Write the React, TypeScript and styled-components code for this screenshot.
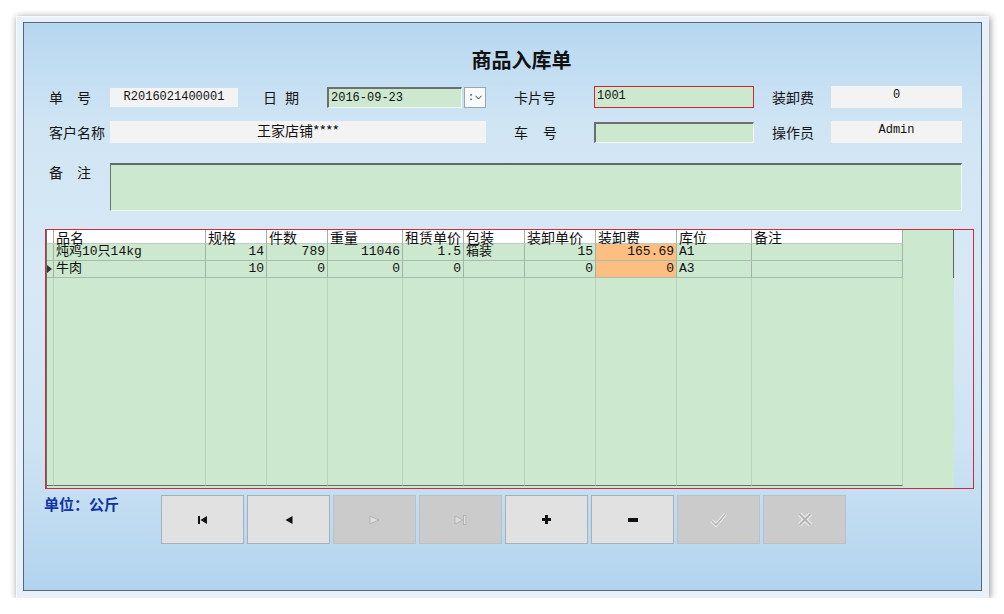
import React from "react";
import styled, { createGlobalStyle } from "styled-components";

const GlobalStyle = createGlobalStyle`
  body {
    margin: 0;
    background: #ffffff;
    font-family: "Noto Sans CJK SC", sans-serif;
  }
`;

const Frame = styled.div`
  margin: 16px 0 0 16px;
  width: 973px;
  height: 582px;
  box-sizing: border-box;
  padding: 6px 7px 7px 7px;
  background: #e8f0f9;
  box-shadow: 1px 1px 7px rgba(0, 0, 0, 0.45), inset 1px 1px 0 #f7fafd;
`;

const Panel = styled.div`
  height: 100%;
  box-sizing: border-box;
  border: 1px solid #56687a;
  background: linear-gradient(180deg, #b6d7f0 0%, #d0e5f4 18%, #d8e9f5 45%, #cde3f3 75%, #b2d4ef 100%);
  display: flex;
  flex-direction: column;
  padding-top: 26px;
`;

const Title = styled.h1`
  margin: 0;
  padding-left: 38px;
  text-align: center;
  font-size: 20px;
  line-height: 22px;
  font-weight: bold;
  color: #111;
`;

const FormRow = styled.div<{ $top: number; $height: number }>`
  display: grid;
  grid-template-columns: 61px 128px 25px 64px 159px 28px 80px 160px 18px 59px 131px;
  grid-template-rows: ${({ $height }) => $height}px;
  align-items: center;
  margin: ${({ $top }) => $top}px 0 0 25px;
`;

const Label = styled.span<{ $col: number; $spacing?: number; $start?: boolean }>`
  grid-column: ${({ $col }) => $col};
  align-self: ${({ $start }) => ($start ? "start" : "center")};
  padding-top: ${({ $start }) => ($start ? 1 : 0)}px;
  font-size: 14px;
  line-height: 16px;
  color: #141414;
  white-space: nowrap;
  letter-spacing: ${({ $spacing }) => $spacing ?? 0}px;
`;

const ReadBox = styled.div<{ $col: string; $mono?: boolean; $h: number }>`
  grid-column: ${({ $col }) => $col};
  height: ${({ $h }) => $h}px;
  box-sizing: border-box;
  padding-top: 2px;
  background: #f3f3f3;
  text-align: center;
  color: #111;
  font-family: ${({ $mono }) => ($mono ? '"Liberation Mono", monospace' : '"Noto Sans CJK SC", sans-serif')};
  font-size: ${({ $mono }) => ($mono ? 12 : 14)}px;
  line-height: 15px;
  white-space: nowrap;
`;

const InputBox = styled.div<{ $alert?: boolean; $col?: number }>`
  ${({ $col }) => ($col ? `grid-column: ${$col};` : "flex: 1;")}
  height: ${({ $alert }) => ($alert ? 22 : 21)}px;
  box-sizing: border-box;
  background: #cce8cf;
  padding: 3px 0 0 2px;
  font-family: "Liberation Mono", monospace;
  font-size: 12px;
  line-height: 13px;
  color: #111;
  border: ${({ $alert }) => ($alert ? "1px solid #cc2636" : "none")};
  ${({ $alert }) =>
    $alert
      ? ""
      : `border-top: 2px solid #6b6f70;
  border-left: 2px solid #6b6f70;
  border-right: 1px solid #f4f6f4;
  border-bottom: 1px solid #f4f6f4;`}
`;

const DateField = styled.div`
  grid-column: 5;
  display: flex;
  gap: 2px;
  height: 21px;
`;

const DropButton = styled.div`
  width: 22px;
  box-sizing: border-box;
  border: 1px solid #9ba5ad;
  background: #f8f9fa;
  display: flex;
  align-items: center;
  justify-content: center;
  gap: 1px;
  font-family: "Liberation Mono", monospace;
  font-size: 10px;
  color: #333;
`;

const NoteArea = styled.div`
  grid-column: 2 / 12;
  height: 48px;
  box-sizing: border-box;
  background: #cce8cf;
  border-top: 2px solid #5f6a6a;
  border-left: 1px solid #6b7272;
  border-right: 1px solid #f4f6f4;
  border-bottom: 1px solid #f4f6f4;
`;

const GridFrame = styled.div`
  margin: 18px 0 0 21px;
  width: 929px;
  height: 260px;
  box-sizing: border-box;
  border: 1px solid #d22a3b;
  display: flex;
`;

const GridArea = styled.div`
  width: 908px;
  box-sizing: border-box;
  background: #cce8cf;
  border-left: 1px solid #6c6c6c;
  padding-bottom: 2px;
  display: flex;
  flex-direction: column;
`;

const GridRow = styled.div<{ $h?: number; $fill?: boolean }>`
  display: flex;
  ${({ $fill, $h }) => ($fill ? "flex: 1;" : `height: ${$h}px;`)}
`;

const Cell = styled.div<{
  $w: number;
  $align?: string;
  $kind: "head" | "data" | "fill";
  $hl?: boolean;
}>`
  width: ${({ $w }) => $w}px;
  flex: none;
  box-sizing: border-box;
  overflow: ${({ $kind }) => ($kind === "head" ? "visible" : "hidden")};
  white-space: nowrap;
  text-align: ${({ $align }) => $align ?? "left"};
  padding: 0 2px 0 2px;
  color: #111;
  background: ${({ $kind, $hl }) => ($kind === "head" ? "#ffffff" : $hl ? "#fdbe82" : "transparent")};
  border-right: 1px solid ${({ $kind }) => ($kind === "fill" ? "#b9d0ba" : "#a2b5a4")};
  border-bottom: 1px solid ${({ $kind }) => ($kind === "fill" ? "#6c6c6c" : $kind === "head" ? "#c4c8c4" : "#a9bcab")};
  font-family: ${({ $kind }) => ($kind === "head" ? '"Noto Sans CJK SC", sans-serif' : '"Liberation Mono", "Noto Sans CJK SC", monospace')};
  font-size: ${({ $kind }) => ($kind === "head" ? 14 : 13)}px;
  line-height: ${({ $kind }) => ($kind === "head" ? 14 : 16)}px;
  position: relative;
`;

const RowTail = styled.div<{ $edge: boolean }>`
  flex: 1;
  border-right: ${({ $edge }) => ($edge ? "1px solid #5e6466" : "none")};
`;

const Pointer = styled.span`
  position: absolute;
  left: 0;
  top: 4px;
  width: 0;
  height: 0;
  border-top: 4px solid transparent;
  border-bottom: 4px solid transparent;
  border-left: 5px solid #333;
`;

const BottomBar = styled.div`
  display: flex;
  align-items: flex-start;
  margin: 6px 0 0 20px;
`;

const Unit = styled.div`
  width: 117px;
  padding-top: 1px;
  font-size: 15px;
  line-height: 16px;
  font-weight: bold;
  color: #1232a6;
`;

const ButtonRow = styled.div`
  display: flex;
  gap: 3px;
`;

const NavButton = styled.div<{ $disabled?: boolean }>`
  width: 83px;
  height: 49px;
  box-sizing: border-box;
  border: 1px solid ${({ $disabled }) => ($disabled ? "#b9c1c8" : "#a6b0ba")};
  background: ${({ $disabled }) => ($disabled ? "#cbcbcb" : "#e1e1e1")};
  display: flex;
  align-items: center;
  justify-content: center;
`;

type Col = { title: string; width: number; align: "left" | "right"; hl?: boolean };

const columns: Col[] = [
  { title: "品名", width: 152, align: "left" },
  { title: "规格", width: 61, align: "right" },
  { title: "件数", width: 61, align: "right" },
  { title: "重量", width: 75, align: "right" },
  { title: "租赁单价", width: 61, align: "right" },
  { title: "包装", width: 61, align: "left" },
  { title: "装卸单价", width: 71, align: "right" },
  { title: "装卸费", width: 81, align: "right", hl: true },
  { title: "库位", width: 75, align: "left" },
  { title: "备注", width: 151, align: "left" },
];

const rows: string[][] = [
  ["炖鸡10只14kg", "14", "789", "11046", "1.5", "箱装", "15", "165.69", "A1", ""],
  ["牛肉", "10", "0", "0", "0", "", "0", "0", "A3", ""],
];

const icons: Record<string, React.ReactNode> = {
  first: (
    <svg width="10" height="8" viewBox="0 0 10 8">
      <rect x="0" y="0" width="2" height="8" fill="#111" />
      <path d="M2.5 4 L9 0 L9 8 Z" fill="#111" />
    </svg>
  ),
  prev: (
    <svg width="8" height="8" viewBox="0 0 8 8">
      <path d="M0.5 4 L7.5 0 L7.5 8 Z" fill="#111" />
    </svg>
  ),
  next: (
    <svg width="11" height="10" viewBox="0 0 11 10">
      <path d="M1 1 L10 5 L1 9 Z" fill="#dedede" stroke="#b3b3b3" strokeWidth="1" />
    </svg>
  ),
  last: (
    <svg width="13" height="10" viewBox="0 0 13 10">
      <path d="M1 1 L9 5 L1 9 Z" fill="#dedede" stroke="#b3b3b3" strokeWidth="1" />
      <rect x="9.5" y="0.5" width="2.5" height="9" fill="#dedede" stroke="#b3b3b3" strokeWidth="1" />
    </svg>
  ),
  add: (
    <svg width="9" height="9" viewBox="0 0 9 9">
      <rect x="3" y="0" width="3" height="9" fill="#111" />
      <rect x="0" y="3" width="9" height="3" fill="#111" />
    </svg>
  ),
  remove: (
    <svg width="10" height="4" viewBox="0 0 10 4">
      <rect x="0" y="0" width="10" height="4" fill="#111" />
    </svg>
  ),
  save: (
    <svg width="17" height="15" viewBox="0 0 17 15">
      <path d="M1.5 8.5 L6 13 L15.5 2" fill="none" stroke="#f2f2f2" strokeWidth="3.4" />
      <path d="M1.5 8.5 L6 13 L15.5 2" fill="none" stroke="#b5b5b5" strokeWidth="1.6" />
    </svg>
  ),
  cancel: (
    <svg width="16" height="15" viewBox="0 0 16 15">
      <path d="M2.5 2 L13.5 13 M13.5 2 L2.5 13" fill="none" stroke="#f0f0f0" strokeWidth="4" />
      <path d="M2.5 2 L13.5 13 M13.5 2 L2.5 13" fill="none" stroke="#b2b2b2" strokeWidth="2" />
    </svg>
  ),
};

const buttons: { key: string; disabled?: boolean }[] = [
  { key: "first" },
  { key: "prev" },
  { key: "next", disabled: true },
  { key: "last", disabled: true },
  { key: "add" },
  { key: "remove" },
  { key: "save", disabled: true },
  { key: "cancel", disabled: true },
];

const App: React.FC = () => {
  return (
    <>
      <GlobalStyle />
      <Frame>
        <Panel>
          <Title>商品入库单</Title>

          <FormRow $top={15} $height={22}>
            <Label $col={1} $spacing={14}>单号</Label>
            <ReadBox $col="2" $mono $h={19}>R2016021400001</ReadBox>
            <Label $col={4} $spacing={8}>日期</Label>
            <DateField>
              <InputBox>2016-09-23</InputBox>
              <DropButton>
                <span>:</span>
                <svg width="7" height="5" viewBox="0 0 7 5">
                  <path d="M0.5 0.8 L3.5 4 L6.5 0.8" fill="none" stroke="#444" strokeWidth="1" />
                </svg>
              </DropButton>
            </DateField>
            <Label $col={7}>卡片号</Label>
            <InputBox $col={8} $alert>1001</InputBox>
            <Label $col={10}>装卸费</Label>
            <ReadBox $col="11" $mono $h={22}>0</ReadBox>
          </FormRow>

          <FormRow $top={13} $height={22}>
            <Label $col={1}>客户名称</Label>
            <ReadBox $col="2 / 6" $h={22}>王家店铺****</ReadBox>
            <Label $col={7} $spacing={15}>车号</Label>
            <InputBox $col={8} />
            <Label $col={10}>操作员</Label>
            <ReadBox $col="11" $mono $h={22}>Admin</ReadBox>
          </FormRow>

          <FormRow $top={20} $height={48}>
            <Label $col={1} $spacing={14} $start>备注</Label>
            <NoteArea />
          </FormRow>

          <GridFrame>
            <GridArea>
              <GridRow $h={14}>
                <Cell $w={7} $kind="head" />
                {columns.map((c) => (
                  <Cell key={c.title} $w={c.width} $kind="head">
                    {c.title}
                  </Cell>
                ))}
                <RowTail $edge />
              </GridRow>
              {rows.map((r, ri) => (
                <GridRow key={ri} $h={17}>
                  <Cell $w={7} $kind="data">{ri === rows.length - 1 && <Pointer />}</Cell>
                  {columns.map((c, ci) => (
                    <Cell key={c.title} $w={c.width} $kind="data" $align={c.align} $hl={c.hl}>
                      {r[ci]}
                    </Cell>
                  ))}
                  <RowTail $edge />
                </GridRow>
              ))}
              <GridRow $fill>
                <Cell $w={7} $kind="fill" />
                {columns.map((c) => (
                  <Cell key={c.title} $w={c.width} $kind="fill" />
                ))}
                <RowTail $edge={false} />
              </GridRow>
            </GridArea>
          </GridFrame>

          <BottomBar>
            <Unit>单位：公斤</Unit>
            <ButtonRow>
              {buttons.map((b) => (
                <NavButton key={b.key} $disabled={b.disabled}>
                  {icons[b.key]}
                </NavButton>
              ))}
            </ButtonRow>
          </BottomBar>
        </Panel>
      </Frame>
    </>
  );
};

export default App;
